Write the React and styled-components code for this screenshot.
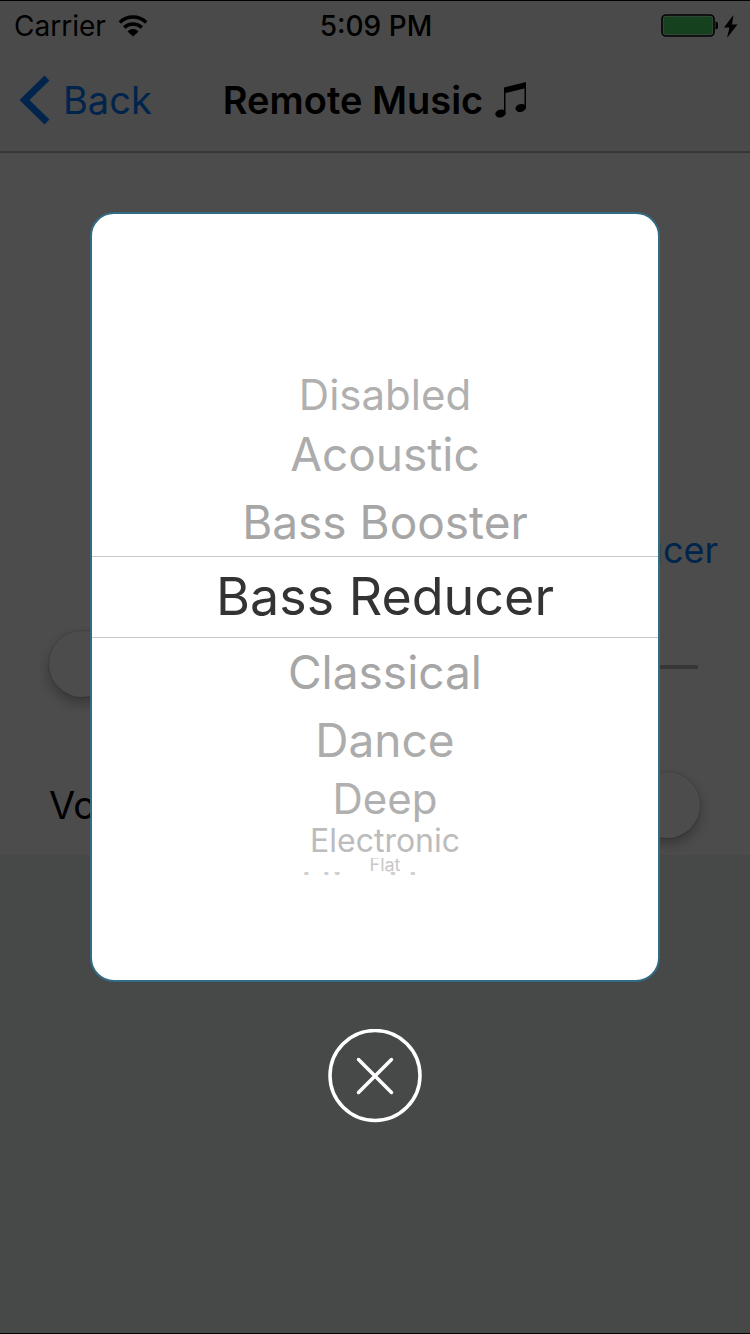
import React, { useState } from "react";
import styled, { createGlobalStyle } from "styled-components";

const Global = createGlobalStyle`
  * { box-sizing: border-box; }
  body {
    margin: 0;
    background: #eef3f0;
    font-family: Inter, "Liberation Sans", sans-serif;
    color: #000;
  }
  button { font: inherit; color: inherit; background: none; border: 0; padding: 0; }
`;

const Screen = styled.div`
  min-height: 100vh;
  display: flex;
  flex-direction: column;
  border-top: 1px solid #000;
  border-bottom: 1px solid #000;
`;

const Header = styled.header`
  background: #f8f8f8;
  border-bottom: 2px solid #b8b8b8;
`;

const StatusBar = styled.div`
  display: grid;
  grid-template-columns: 1fr auto 1fr;
  align-items: center;
  height: 50px;
  padding: 0 12px 0 14px;
  font-size: 28px;
`;

const StatusGroup = styled.div`
  display: flex;
  align-items: center;
  gap: ${(p) => p.$gap}px;
  justify-content: ${(p) => (p.$end ? "flex-end" : "flex-start")};
`;

const Clock = styled.time`
  font-weight: 500;
`;

const NavBar = styled.nav`
  display: grid;
  grid-template-columns: 1fr auto 1fr;
  align-items: center;
  height: 100px;
  padding: 0 20px 2px;
`;

const BackButton = styled.button`
  display: flex;
  align-items: center;
  gap: 13px;
  font-size: 38px;
  color: #007aff;
`;

const Title = styled.h1`
  display: flex;
  align-items: center;
  gap: 12px;
  margin: 0;
  font-size: 38px;
  font-weight: 600;
`;

const Content = styled.main`
  display: flex;
  flex-direction: column;
  background: #fff;
  padding: 357px 50px 17px 49px;
`;

const PresetButton = styled.button`
  align-self: flex-end;
  margin-right: -18px;
  height: 80px;
  font-size: 36px;
  color: #007aff;
`;

const SliderRow = styled.label`
  display: flex;
  align-items: center;
  gap: 30px;
  margin-top: ${(p) => p.$space}px;
  font-size: 38px;
`;

const Slider = styled.input`
  appearance: none;
  flex: 1;
  min-width: 0;
  height: 66px;
  margin: 0;
  background: none;

  &::-webkit-slider-runnable-track {
    height: 66px;
    background: linear-gradient(#b8b8b8, #b8b8b8) 2px 34px / calc(100% - 4px) 4px no-repeat;
  }
  &::-webkit-slider-thumb {
    appearance: none;
    width: 66px;
    height: 66px;
    border-radius: 50%;
    background: #fff;
    box-shadow: 0 0 1px 1px rgba(0, 0, 0, 0.1), 0 6px 14px rgba(0, 0, 0, 0.3);
  }
`;

const Overlay = styled.div`
  position: absolute;
  inset: 0;
  display: flex;
  flex-direction: column;
  align-items: center;
  gap: 47px;
  padding: 212px 90px 0;
  background: rgba(0, 0, 0, 0.7);
`;

const Dialog = styled.section`
  width: 100%;
  height: 770px;
  padding-top: 156px;
  background: #fff;
  border: 2px solid #336b85;
  border-radius: 24px;
  overflow: hidden;
`;

const Wheel = styled.fieldset`
  margin: 0;
  padding: 0;
  border: 0;
`;

const Option = styled.label`
  position: relative;
  display: flex;
  justify-content: center;
  align-items: ${(p) => (p.$cut ? "flex-start" : "center")};
  height: ${(p) => p.$height}px;
  padding-left: 20px;
  overflow: hidden;
  border: solid #c8c8c8;
  border-width: ${(p) => (p.$selected ? "1px 0" : "0")};
  font-size: ${(p) => p.$size}px;
  line-height: ${(p) => (p.$cut ? "30px" : "1")};
  color: ${(p) => p.$color};
`;

const HiddenRadio = styled.input`
  position: absolute;
  opacity: 0;
  margin: 0;
`;

const CloseButton = styled.button`
  width: 94px;
  height: 94px;
  flex: none;
`;

/* Rows shrink and fade as they turn away from the centre of the wheel. */
const presets = [
  { name: "Disabled", height: 50, size: 42, color: "#b0b0b0" },
  { name: "Acoustic", height: 68, size: 46, color: "#acacac" },
  { name: "Bass Booster", height: 68, size: 46, color: "#a6a6a6" },
  { name: "Bass Reducer", height: 82, size: 52, color: "#333" },
  { name: "Classical", height: 68, size: 46, color: "#a6a6a6" },
  { name: "Dance", height: 68, size: 46, color: "#acacac" },
  { name: "Deep", height: 50, size: 42, color: "#b0b0b0" },
  { name: "Electronic", height: 34, size: 32, color: "#bcbcbc" },
  { name: "Flat", height: 14, size: 18, color: "#c8c8c8" },
  { name: "Hip-Hop", height: 3, size: 42, color: "#d0d0d0", cut: true },
];

function WifiIcon() {
  return (
    <svg width="30" height="22" viewBox="0 0 30 22" fill="none" stroke="#000" strokeWidth="3.5">
      <path d="M1.8 7.4a19 19 0 0 1 26.4 0" />
      <path d="M6.2 12.6a12.8 12.8 0 0 1 17.6 0" />
      <path d="M15 21.5l-5.500-5a7.500 7.500 0 0 1 11 0z" fill="#000" stroke="none" />
    </svg>
  );
}

function BatteryIcon() {
  return (
    <svg width="57" height="26" viewBox="0 0 57 26">
      <rect x="1" y="2" width="52" height="21" rx="4" fill="none" stroke="#000" strokeWidth="1.6" />
      <rect x="2.5" y="3.5" width="49" height="18" rx="2" fill="#4cd964" />
      <path d="M54.500 8.500c4 .5 4 7.500 0 8z" />
    </svg>
  );
}

function BoltIcon() {
  return (
    <svg width="14" height="23" viewBox="0 0 14 23">
      <path d="M9.5 0L0 12.5h5.5L3 23l10.500-13.500H8z" />
    </svg>
  );
}

function ChevronIcon() {
  return (
    <svg width="30" height="50" viewBox="0 0 30 50" fill="none" stroke="currentColor" strokeWidth="7">
      <path d="M27 3L4.500 25 27 47" />
    </svg>
  );
}

function NoteIcon() {
  return (
    <svg width="32" height="36" viewBox="0 0 32 36">
      <path d="M9 5.500L31 0v6L10.500 11v20H9z" />
      <path d="M29.500 3H31v23h-1.500z" />
      <ellipse cx="5.500" cy="31.500" rx="5.300" ry="3.900" transform="rotate(-15 5.500 31.500)" />
      <ellipse cx="25.700" cy="26" rx="5.300" ry="3.900" transform="rotate(-15 25.700 26)" />
    </svg>
  );
}

function CloseIcon() {
  return (
    <svg width="94" height="94" viewBox="0 0 94 94" fill="none" stroke="#fff" strokeWidth="3.5">
      <circle cx="47" cy="46.5" r="45" />
      <path d="M30.5 30.5l33 33M63.5 30.5l-33 33" strokeLinecap="round" />
    </svg>
  );
}

export default function App() {
  const [selected, setSelected] = useState("Bass Reducer");
  return (
    <>
      <Global />
      <Screen>
        <Header>
          <StatusBar>
            <StatusGroup $gap={12}>
              <span>Carrier</span>
              <WifiIcon />
            </StatusGroup>
            <Clock>5:09 PM</Clock>
            <StatusGroup $gap={6} $end>
              <BatteryIcon />
              <BoltIcon />
            </StatusGroup>
          </StatusBar>
          <NavBar>
            <BackButton type="button">
              <ChevronIcon />
              Back
            </BackButton>
            <Title>
              Remote Music
              <NoteIcon />
            </Title>
          </NavBar>
        </Header>
        <Content>
          <PresetButton type="button">{selected}</PresetButton>
          <SliderRow $space={41}>
            <Slider type="range" min="0" max="100" defaultValue="0" aria-label="Position" />
          </SliderRow>
          <SliderRow $space={75}>
            Volume
            <Slider type="range" min="0" max="100" defaultValue="100" />
          </SliderRow>
        </Content>
      </Screen>
      <Overlay>
        <Dialog role="dialog" aria-label="Equalizer">
          <Wheel>
            {presets.map((p) => (
              <Option
                key={p.name}
                $height={p.height}
                $size={p.size}
                $color={p.color}
                $cut={p.cut}
                $selected={p.name === selected}
              >
                <HiddenRadio
                  type="radio"
                  name="preset"
                  checked={p.name === selected}
                  onChange={() => setSelected(p.name)}
                />
                {p.name}
              </Option>
            ))}
          </Wheel>
        </Dialog>
        <CloseButton type="button" aria-label="Close">
          <CloseIcon />
        </CloseButton>
      </Overlay>
    </>
  );
}
